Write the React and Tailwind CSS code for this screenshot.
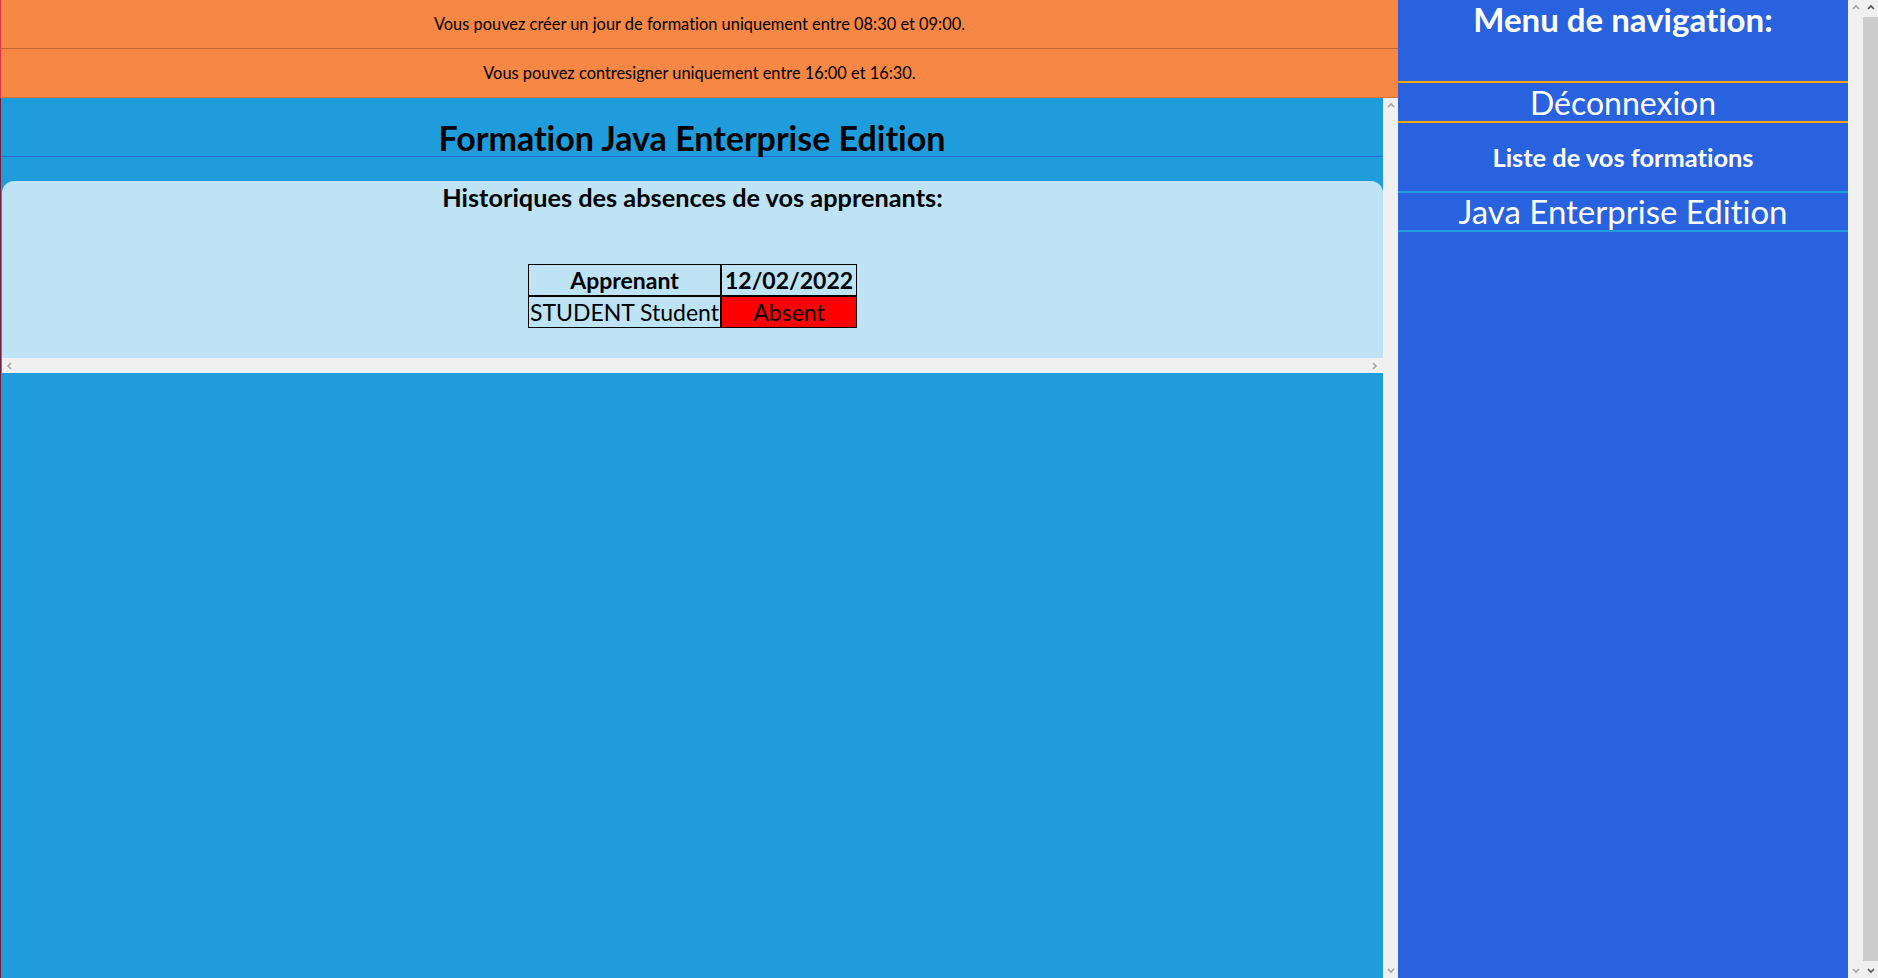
import React from "react";

function Arrow({ dir = "up", dark = false }) {
    const pts = {
        up: "1,5 4,2 7,5",
        down: "1,2 4,5 7,2",
        left: "5,1 2,4 5,7",
        right: "2,1 5,4 2,7",
    };
    return (
        <svg width="8" height="8" viewBox="0 0 8 8" className="block">
            <polyline points={pts[dir]} fill="none" stroke={dark ? "#505050" : "#a3a3a3"} strokeWidth="1.6" />
        </svg>
    );
}

function VScroll({ dark = false, thumb = false }) {
    return (
        <div className="flex w-[15px] shrink-0 flex-col items-center bg-[#f0f0f0]">
            <div className="flex h-[15px] items-center justify-center"><Arrow dir="up" dark={dark} /></div>
            <div className="w-full flex-1 py-[2px]">
                {thumb && <div className="h-full w-full bg-[#cdcdcd]" />}
            </div>
            <div className="flex h-[15px] items-center justify-center"><Arrow dir="down" dark={dark} /></div>
        </div>
    );
}

export default function App() {
    return (
        <div className="flex h-[978px] w-[1878px] overflow-hidden font-['Lato',sans-serif] text-black [font-variant-ligatures:none]">
            {/* main column */}
            <div className="flex w-[1398px] shrink-0 flex-col">
                <div className="flex h-[49px] items-center justify-center border-b border-l border-b-[#c5652f] border-l-[#e0344a] bg-[#f68744] text-[16.4px]">
                    Vous pouvez créer un jour de formation uniquement entre 08:30 et 09:00.
                </div>
                <div className="flex h-[49px] items-center justify-center border-b border-l border-b-[#d9733a] border-l-[#e0344a] bg-[#f68744] text-[16.4px]">
                    Vous pouvez contresigner uniquement entre 16:00 et 16:30.
                </div>

                <div className="flex min-h-0 flex-1">
                    <div className="flex-1 border-l border-[#6e2040] bg-[#1e9cdc]">
                        <div className="border-b border-[#2b6ad8] pt-[21px] text-center">
                            <h1 className="text-[34px] leading-[37px] font-bold">Formation Java Enterprise Edition</h1>
                        </div>

                        <div className="mt-[24px] ml-px flex flex-col rounded-t-[12px] bg-[#bde3f4]">
                            <h2 className="pt-[2px] text-center text-[25.3px] leading-[28px] font-bold">Historiques des absences de vos apprenants:</h2>
                            <table className="mx-auto mt-[53px] mb-[30px] border-separate border-spacing-0 text-[23px] leading-[28px]">
                                <thead>
                                    <tr>
                                        <th className="w-[192px] border border-black p-px font-bold">Apprenant</th>
                                        <th className="w-[136px] border border-black p-px font-bold">12/02/2022</th>
                                    </tr>
                                </thead>
                                <tbody>
                                    <tr>
                                        <td className="border border-black p-px text-center whitespace-nowrap">STUDENT Student</td>
                                        <td className="border border-black bg-[#ff0000] p-px text-center">Absent</td>
                                    </tr>
                                </tbody>
                            </table>
                            <div className="flex h-[15px] items-center justify-between bg-[#f0f0f0] px-[4px]">
                                <Arrow dir="left" />
                                <Arrow dir="right" />
                            </div>
                        </div>
                    </div>
                    <VScroll />
                </div>
            </div>

            {/* navigation */}
            <aside className="flex w-[450px] shrink-0 flex-col bg-[#2962df] text-center text-white">
                <h1 className="h-[81px] pt-[3px] text-[33px] leading-[33px] font-bold">Menu de navigation:</h1>
                <div className="border-y-2 border-[#ffa500] pt-px text-[32px] leading-[37px]">Déconnexion</div>
                <div className="flex h-[68px] items-center justify-center text-[25.4px] leading-[28px] font-bold">Liste de vos formations</div>
                <div className="border-y-2 border-[#1e9cdc] text-[33px] leading-[37px]">Java Enterprise Edition</div>
            </aside>

            <VScroll />
            <VScroll dark thumb />
        </div>
    );
}
